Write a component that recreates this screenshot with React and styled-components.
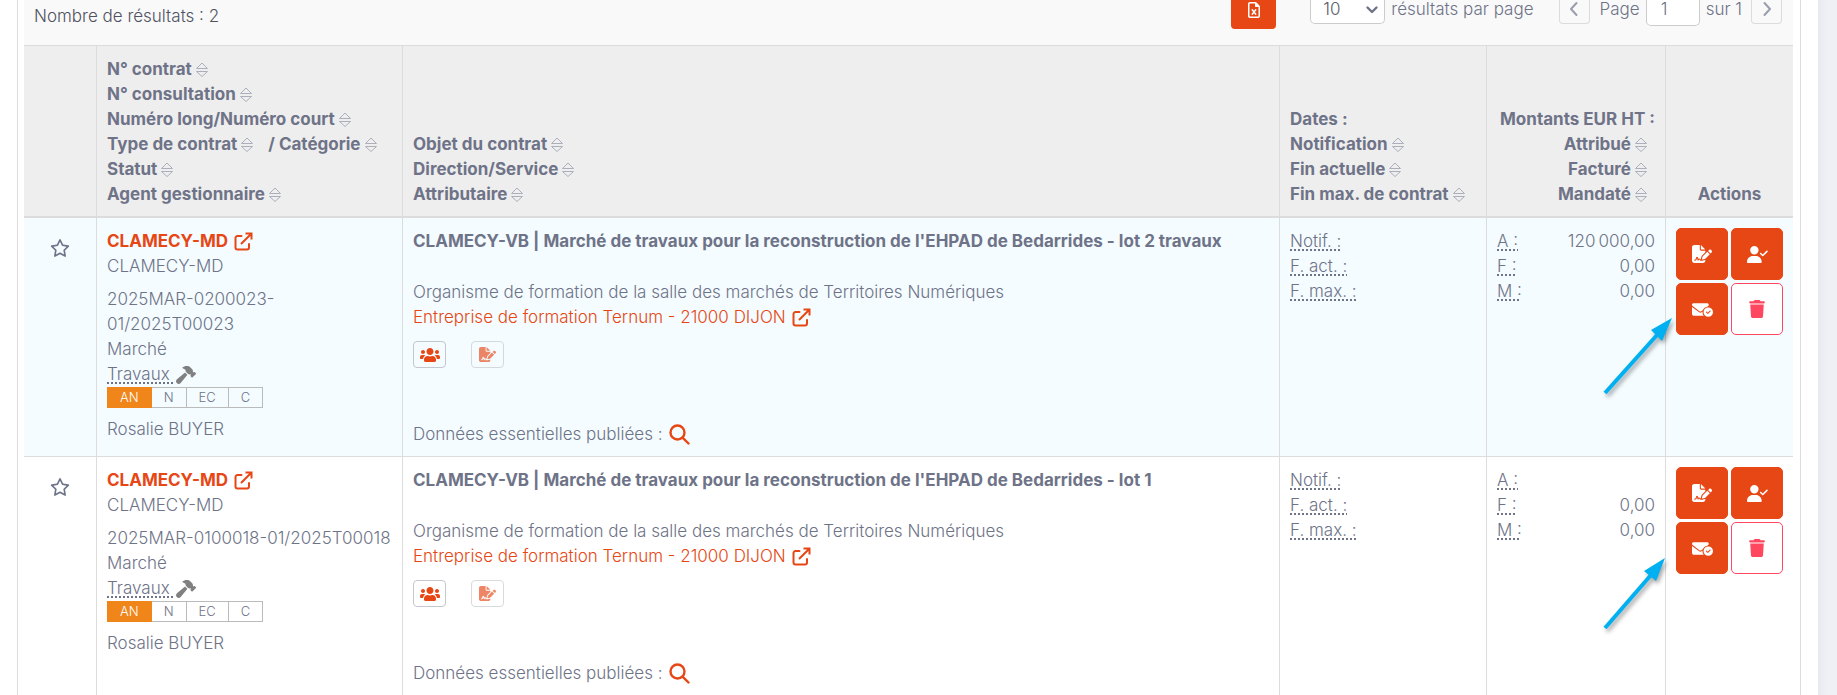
import React from 'react';
import styled, { createGlobalStyle, css } from 'styled-components';
import { FaUsers } from 'react-icons/fa';
import {
  FaEnvelopeCircleCheck,
  FaFileSignature,
  FaHammer,
  FaRegFileExcel,
  FaRegStar,
  FaTrash,
  FaUserCheck,
} from 'react-icons/fa6';

const colors = {
  text: '#6e7388',
  primary: '#e64714',
  badge: '#f08519',
  danger: '#ff4760',
  border: '#dcdcdc',
  arrow: '#00b0f0',
};

const GlobalStyle = createGlobalStyle`
  * {
    box-sizing: border-box;
  }

  body {
    margin: 0;
    background: #fff;
    color: ${colors.text};
    font: 350 17px/25px Inter, sans-serif;
  }

  button, input, select {
    font: inherit;
    color: inherit;
  }
`

const Page = styled.div`
  display: grid;
  grid-template-columns: 1fr 19px;
  height: 100vh;
  overflow: hidden;
`

const Gutter = styled.div`
  background: linear-gradient(to right, #e8e9ee, #eff0f6 8px);
`

const Panel = styled.main`
  margin: 0 17px;
  padding: 0 7px 0 6px;
  border: solid ${colors.border};
  border-width: 0 1px;
`

// the list is scrolled: the top of the toolbar is out of view
const Toolbar = styled.div`
  display: flex;
  align-items: center;
  margin-top: -10px;
  padding: 0 11px 16px 10px;
  background: #f9f9f9;
`

const Count = styled.p`
  flex: 1;
  align-self: flex-end;
  margin: 0;
  color: #50525f;
`

const ExportButton = styled.button`
  display: grid;
  place-items: center;
  width: 45px;
  height: 39px;
  margin-right: 34px;
  border: 0;
  border-radius: 0 0 4px 4px;
  background: ${colors.primary};
  color: #fff;
  cursor: pointer;
`

const PageSize = styled.div`
  display: flex;
  align-items: center;
  gap: 6px;
  margin-right: 25px;
`

const SelectWrap = styled.span`
  display: grid;
  align-items: center;

  select, svg {
    grid-area: 1 / 1;
  }

  svg {
    justify-self: end;
    margin-right: 4px;
    pointer-events: none;
  }
`

const Select = styled.select`
  appearance: none;
  width: 75px;
  height: 28px;
  padding: 0 12px;
  border: solid #ccc;
  border-width: 0 1px 1px;
  border-radius: 0 0 5px 5px;
  background: #fff;
  color: #5b5d68;
`

const Pager = styled.nav`
  display: flex;
  align-items: center;
  gap: 6px;
`

const PagerButton = styled.button`
  display: grid;
  place-items: center;
  width: 31px;
  height: 28px;
  margin: 0 4px 0 0;
  padding: 0;
  border: solid ${colors.border};
  border-width: 0 1px 1px;
  border-radius: 0 0 4px 4px;
  background: transparent;
  color: #9a9dad;
  cursor: pointer;

  &:last-child {
    margin: 0 0 0 3px;
  }
`

const PageInput = styled.input`
  width: 54px;
  height: 32px;
  padding: 0 14px;
  border: solid #ccc;
  border-width: 0 1px 1px;
  border-radius: 0 0 5px 5px;
  background: #fff;
`

const Table = styled.table`
  width: 100%;
  table-layout: fixed;
  border-collapse: separate;
  border-spacing: 0;
  border-top: 1px solid ${colors.border};
`

const Col = styled.col`
  width: ${({ $width }) => $width || 'auto'};
`

const HeadCell = styled.th`
  padding: 11px 10px 9px;
  border-bottom: 2px solid ${colors.border};
  background: #eee;
  font-weight: 700;
  text-align: ${({ $align }) => $align || 'left'};
  vertical-align: bottom;
  white-space: nowrap;

  & + & {
    border-left: 1px solid ${colors.border};
  }
`

const HeadLine = styled.div`
  display: flex;
  align-items: center;
  justify-content: ${({ $end }) => ($end ? 'flex-end' : 'flex-start')};
  gap: 4px;
  padding-right: ${({ $end }) => ($end ? '8px' : '0')};
`

const Slash = styled.span`
  margin-left: 11px;
`

const Cell = styled.td`
  position: relative;
  padding: ${({ $flush }) => ($flush ? '10px' : '11px 10px 9px')};
  border-bottom: 1px solid ${colors.border};
  vertical-align: top;
  text-align: ${({ $align }) => $align || 'left'};

  & + & {
    border-left: 1px solid ${colors.border};
  }
`

const Row = styled.tr`
  background: ${({ $striped }) => ($striped ? '#f4fcff' : '#fff')};
`

const StarButton = styled.button`
  display: inline-grid;
  padding: 9px 0;
  border: 0;
  background: none;
  cursor: pointer;
`

const Line = styled.div`
  display: flex;
  align-items: center;
  gap: ${({ $gap }) => $gap || '6px'};
  margin-top: ${({ $space }) => $space || '0'};
  white-space: nowrap;
`

const Title = styled.div`
  font-weight: 700;
`

const Link = styled.a`
  display: inline-flex;
  align-items: center;
  gap: 6px;
  color: ${colors.primary};
  font-weight: ${({ $bold }) => ($bold ? '700' : 'inherit')};
  text-decoration: none;
`

const Abbr = styled.abbr`
  text-decoration: underline dotted 2px;
  text-decoration-skip-ink: none;
  text-underline-offset: 2px;
`

const Status = styled.div`
  display: flex;
`

const Badge = styled.span`
  padding: 0 12px;
  border: 1px solid #bbb;
  border-left-width: ${({ $active }) => ($active ? '1px' : '0')};
  font-size: 13px;
  line-height: 19px;

  ${({ $active }) => $active && css`
    border-color: ${colors.badge};
    background: ${colors.badge};
    color: #fff;
  `}
`

const SmallButtons = styled.div`
  display: flex;
  gap: 25px;
  margin: 11px 0 54px;
`

const SmallButton = styled.button`
  display: grid;
  place-items: center;
  width: 33px;
  height: 27px;
  padding: 0;
  border: 1px solid #c4c7cb;
  border-radius: 4px;
  background: transparent;
  color: ${colors.primary};
  cursor: pointer;

  &:disabled {
    opacity: .65;
    color: ${colors.primary};
  }
`

const Amount = styled.div`
  display: flex;
  justify-content: space-between;
`

const Actions = styled.div`
  display: grid;
  grid-template-columns: 52px 52px;
  gap: 3px;
`

const ActionButton = styled.button`
  display: grid;
  place-items: center;
  height: 52px;
  border: 1px solid ${({ $danger }) => ($danger ? colors.danger : colors.primary)};
  border-radius: 5px;
  background: ${({ $danger }) => ($danger ? '#fff' : colors.primary)};
  color: ${({ $danger }) => ($danger ? colors.danger : '#fff')};
  cursor: pointer;
`

const Pointer = styled.svg`
  position: absolute;
  left: -66px;
  top: 90px;
  pointer-events: none;
  filter: drop-shadow(2px 3px 2px rgba(0, 0, 0, .35));
`

function SortIcon() {
  return (
    <svg width="12" height="15" viewBox="0 0 12 15" fill="none" stroke="#acafbb" strokeLinejoin="round">
      <path d="M.5 6.500 6 1l5.500 5.500z" />
      <path d="M.5 9.500h11L6 14.500z" />
    </svg>
  )
}

function ExternalIcon() {
  return (
    <svg width="19" height="19" viewBox="0 0 19 19" fill="none" stroke={colors.primary} strokeWidth="2">
      <path d="M7.500 4H3.500A2 2 0 0 0 1.500 6v9.500a2 2 0 0 0 2 2H13a2 2 0 0 0 2-2V12" strokeLinecap="round" />
      <path d="M7 12 17 2M11.500 1.500H17.500V7.500" />
    </svg>
  )
}

function SearchIcon() {
  return (
    <svg width="21" height="21" viewBox="0 0 21 21" fill="none" stroke={colors.primary} strokeWidth="2.400" strokeLinecap="round">
      <circle cx="8.500" cy="8.500" r="7" />
      <path d="m13.800 13.800 5.700 5.700" />
    </svg>
  )
}

function Chevron({ d, size = 18, width = 2 }) {
  return (
    <svg width={size} height={size} viewBox="0 0 18 18" fill="none" stroke="currentColor" strokeWidth={width} strokeLinecap="round" strokeLinejoin="round">
      <path d={d} />
    </svg>
  )
}

function Sortable({ children, end }) {
  return <HeadLine $end={end}>{children}<SortIcon /></HeadLine>
}

const contracts = [
  {
    id: 1,
    numbers: ['2025MAR-0200023-', '01/2025T00023'],
    title: "CLAMECY-VB | Marché de travaux pour la reconstruction de l'EHPAD de Bedarrides - lot 2 travaux",
    amounts: [['A :', '120\u2009000,00'], ['F :', '0,00'], ['M :', '0,00']],
    pointer: { shaft: 'M5 85 57 27', head: 'M72 10 51 22 56 27 62 33z' },
  },
  {
    id: 2,
    numbers: ['2025MAR-0100018-01/2025T00018'],
    title: "CLAMECY-VB | Marché de travaux pour la reconstruction de l'EHPAD de Bedarrides - lot 1",
    amounts: [['A :', ''], ['F :', '0,00'], ['M :', '0,00']],
    pointer: { shaft: 'M5 81 51 28', head: 'M65 11 44 24 50 29 56 34z' },
  },
];

function Contract({ contract, striped }) {
  const { numbers, title, amounts, pointer } = contract;

  return (
    <Row $striped={striped}>
      <Cell $align="center">
        <StarButton aria-label="Ajouter aux favoris"><FaRegStar size={20} /></StarButton>
      </Cell>
      <Cell>
        <Line><Link href="#contrat" $bold>CLAMECY-MD <ExternalIcon /></Link></Line>
        <Line>CLAMECY-MD</Line>
        <Line $space="8px">{numbers[0]}</Line>
        {numbers[1] && <Line>{numbers[1]}</Line>}
        <Line>Marché</Line>
        <Line $gap="2px"><Abbr>Travaux&nbsp;</Abbr><FaHammer size={20} color="#808080" /></Line>
        <Status>
          <Badge $active>AN</Badge>
          <Badge>N</Badge>
          <Badge>EC</Badge>
          <Badge>C</Badge>
        </Status>
        <Line $space="9px">Rosalie BUYER</Line>
      </Cell>
      <Cell>
        <Title>{title}</Title>
        <Line $space="26px">Organisme de formation de la salle des marchés de Territoires Numériques</Line>
        <Line><Link href="#entreprise">Entreprise de formation Ternum - 21000 DIJON <ExternalIcon /></Link></Line>
        <SmallButtons>
          <SmallButton aria-label="Contacts"><FaUsers size={20} /></SmallButton>
          <SmallButton aria-label="Signature" disabled><FaFileSignature size={17} /></SmallButton>
        </SmallButtons>
        <Line>Données essentielles publiées : <SearchIcon /></Line>
      </Cell>
      <Cell>
        <div><Abbr>Notif. :</Abbr></div>
        <div><Abbr>F. act. :</Abbr></div>
        <div><Abbr>F. max. :</Abbr></div>
      </Cell>
      <Cell>
        {amounts.map(([label, value]) => (
          <Amount key={label}><Abbr>{label}</Abbr><span>{value}</span></Amount>
        ))}
      </Cell>
      <Cell $flush>
        <Actions>
          <ActionButton aria-label="Modifier"><FaFileSignature size={20} /></ActionButton>
          <ActionButton aria-label="Valider"><FaUserCheck size={21} /></ActionButton>
          <ActionButton aria-label="Notifier"><FaEnvelopeCircleCheck size={21} /></ActionButton>
          <ActionButton aria-label="Supprimer" $danger><FaTrash size={18} /></ActionButton>
        </Actions>
        <Pointer width="80" height="92" viewBox="0 0 80 92">
          <path d={pointer.shaft} stroke={colors.arrow} strokeWidth="4" />
          <path d={pointer.head} fill={colors.arrow} />
        </Pointer>
      </Cell>
    </Row>
  )
}

function App() {
  return (
    <Page>
      <GlobalStyle />
      <Panel>
        <Toolbar>
          <Count>Nombre de résultats : 2</Count>
          <ExportButton aria-label="Exporter"><FaRegFileExcel size={16} /></ExportButton>
          <PageSize>
            <SelectWrap>
              <Select id="page-size" defaultValue="10">
                <option>10</option>
                <option>20</option>
              </Select>
              <Chevron d="m4.500 6.500 4.500 4.500 4.500-4.500" width={2.4} />
            </SelectWrap>
            <label htmlFor="page-size">résultats par page</label>
          </PageSize>
          <Pager>
            <PagerButton aria-label="Page précédente"><Chevron d="M11.500 3 6 9l5.500 6" /></PagerButton>
            <label htmlFor="page">Page</label>
            <PageInput id="page" defaultValue="1" />
            <span>sur 1</span>
            <PagerButton aria-label="Page suivante"><Chevron d="m6.500 3 5.500 6-5.500 6" /></PagerButton>
          </Pager>
        </Toolbar>
        <Table>
          <colgroup>
            <Col $width="72px" />
            <Col $width="306px" />
            <Col />
            <Col $width="207px" />
            <Col $width="179px" />
            <Col $width="128px" />
          </colgroup>
          <thead>
            <tr>
              <HeadCell />
              <HeadCell>
                <Sortable>N° contrat</Sortable>
                <Sortable>N° consultation</Sortable>
                <Sortable>Numéro long/Numéro court</Sortable>
                <HeadLine>Type de contrat<SortIcon /><Slash>/ Catégorie</Slash><SortIcon /></HeadLine>
                <Sortable>Statut</Sortable>
                <Sortable>Agent gestionnaire</Sortable>
              </HeadCell>
              <HeadCell>
                <Sortable>Objet du contrat</Sortable>
                <Sortable>Direction/Service</Sortable>
                <Sortable>Attributaire</Sortable>
              </HeadCell>
              <HeadCell>
                <div>Dates :</div>
                <Sortable>Notification</Sortable>
                <Sortable>Fin actuelle</Sortable>
                <Sortable>Fin max. de contrat</Sortable>
              </HeadCell>
              <HeadCell $align="right">
                <div>Montants EUR HT :</div>
                <Sortable end>Attribué</Sortable>
                <Sortable end>Facturé</Sortable>
                <Sortable end>Mandaté</Sortable>
              </HeadCell>
              <HeadCell $align="center">Actions</HeadCell>
            </tr>
          </thead>
          <tbody>
            {contracts.map((contract, i) => (
              <Contract key={contract.id} contract={contract} striped={i % 2 === 0} />
            ))}
          </tbody>
        </Table>
      </Panel>
      <Gutter />
    </Page>
  )
}

export default App;
